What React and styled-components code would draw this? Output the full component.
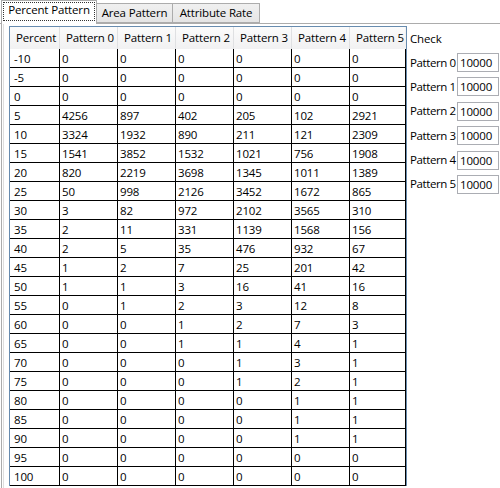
import React from "react";
import styled, { createGlobalStyle } from "styled-components";

const Global = createGlobalStyle`
  html, body { margin: 0; padding: 0; background: #fff; }
  body {
    font-family: "Open Sans", "Noto Sans", sans-serif;
    font-size: 11.5px;
    letter-spacing: -0.15px;
    color: #000;
  }
`;

const Window = styled.div`
  width: 500px;
  height: 488px;
  overflow: hidden;
  background: #fff;
  display: flex;
  flex-direction: column;
`;

const TabStrip = styled.div`
  display: flex;
  align-items: flex-end;
  height: 23px;
  padding-left: 1px;
  border-bottom: 1px solid #acacac;
  flex-shrink: 0;
`;

const Tab = styled.div`
  box-sizing: border-box;
  height: ${(p) => (p.$active ? "24px" : "20px")};
  margin-bottom: ${(p) => (p.$active ? "-1px" : "0")};
  margin-left: ${(p) => (p.$active ? "0" : "-1px")};
  width: ${(p) => p.$w}px;
  border: 1px solid #acacac;
  border-bottom: ${(p) => (p.$active ? "none" : "1px solid #acacac")};
  background: ${(p) => (p.$active ? "#fff" : "linear-gradient(#f0f0f0, #e5e5e5)")};
  padding: ${(p) => (p.$active ? "1px" : "0")};
  position: relative;
  z-index: ${(p) => (p.$active ? 1 : 0)};
  display: flex;
`;

const TabLabel = styled.span`
  flex: 1;
  display: flex;
  align-items: center;
  justify-content: center;
  line-height: 16px;
  padding-bottom: ${(p) => (p.$active ? "3px" : "0")};
  border: ${(p) => (p.$active ? "1px dotted #333" : "1px solid transparent")};
  margin-bottom: ${(p) => (p.$active ? "2px" : "0")};
  white-space: nowrap;
`;

const Panel = styled.div`
  flex: 1;
  display: flex;
  margin-left: 1px;
  border-left: 1px solid #acacac;
  min-height: 0;
`;

const Frame = styled.div`
  margin-left: 1px;
  border-left: 1px solid #dedede;
  padding: 2px 0 0 5px;
  flex-shrink: 0;
`;

const Grid = styled.div`
  width: 398px;
  box-sizing: border-box;
  border: 1px solid #688caf;
  border-bottom: none;
  display: grid;
  grid-template-columns: 50px repeat(5, 58px) 56px;
  grid-auto-rows: 19px;
  grid-template-rows: 22px;
`;

const HeadCell = styled.div`
  box-sizing: border-box;
  background: linear-gradient(#fbfbfb, #f1f1f2);
  border-right: 1px solid ${(p) => (p.$last ? "#f1f1f2" : "#dfe0e2")};
  display: flex;
  align-items: flex-end;
  padding: 0 0 3px 6px;
  line-height: 16px;
  white-space: nowrap;
  overflow: hidden;
`;

const Cell = styled.div`
  box-sizing: border-box;
  border-right: 1px solid #000;
  border-bottom: 1px solid #000;
  display: flex;
  align-items: center;
  padding: 1px 0 0 ${(p) => (p.$first ? "4px" : "2px")};
  line-height: 16px;
  white-space: nowrap;
`;

const Side = styled.div`
  width: 93px;
  box-sizing: border-box;
  display: flex;
  flex-direction: column;
  padding: 7px 1px 0 3px;
`;

const CheckTitle = styled.div`
  line-height: 16px;
  height: 16px;
  margin-bottom: 6px;
`;

const CheckRow = styled.div`
  display: flex;
  align-items: center;
  justify-content: space-between;
  height: 19px;
  margin-bottom: 5.4px;
`;

const CheckLabel = styled.span`
  line-height: 16px;
  white-space: nowrap;
  letter-spacing: -0.4px;
`;

const TextBox = styled.div`
  box-sizing: border-box;
  width: 42px;
  height: 19px;
  border: 1px solid #abadb3;
  padding: 0 0 0 2px;
  line-height: 17px;
  background: #fff;
`;

const headers = ["Percent", "Pattern 0", "Pattern 1", "Pattern 2", "Pattern 3", "Pattern 4", "Pattern 5"];

const rows = [
  [-10, 0, 0, 0, 0, 0, 0],
  [-5, 0, 0, 0, 0, 0, 0],
  [0, 0, 0, 0, 0, 0, 0],
  [5, 4256, 897, 402, 205, 102, 2921],
  [10, 3324, 1932, 890, 211, 121, 2309],
  [15, 1541, 3852, 1532, 1021, 756, 1908],
  [20, 820, 2219, 3698, 1345, 1011, 1389],
  [25, 50, 998, 2126, 3452, 1672, 865],
  [30, 3, 82, 972, 2102, 3565, 310],
  [35, 2, 11, 331, 1139, 1568, 156],
  [40, 2, 5, 35, 476, 932, 67],
  [45, 1, 2, 7, 25, 201, 42],
  [50, 1, 1, 3, 16, 41, 16],
  [55, 0, 1, 2, 3, 12, 8],
  [60, 0, 0, 1, 2, 7, 3],
  [65, 0, 0, 1, 1, 4, 1],
  [70, 0, 0, 0, 1, 3, 1],
  [75, 0, 0, 0, 1, 2, 1],
  [80, 0, 0, 0, 0, 1, 1],
  [85, 0, 0, 0, 0, 1, 1],
  [90, 0, 0, 0, 0, 1, 1],
  [95, 0, 0, 0, 0, 0, 0],
  [100, 0, 0, 0, 0, 0, 0],
];

const tabs = [
  { label: "Percent Pattern", w: 96, active: true },
  { label: "Area Pattern", w: 77 },
  { label: "Attribute Rate", w: 88 },
];

export default function App() {
  return (
    <>
      <Global />
      <Window>
        <TabStrip>
          {tabs.map((t) => (
            <Tab key={t.label} $active={t.active} $w={t.w}>
              <TabLabel $active={t.active}>{t.label}</TabLabel>
            </Tab>
          ))}
        </TabStrip>
        <Panel>
          <Frame>
            <Grid>
              {headers.map((h, i) => (
                <HeadCell key={h} $last={i === headers.length - 1}>{h}</HeadCell>
              ))}
              {rows.map((r) =>
                r.map((v, i) => (
                  <Cell key={`${r[0]}-${i}`} $first={i === 0}>{v}</Cell>
                ))
              )}
            </Grid>
          </Frame>
          <Side>
            <CheckTitle>Check</CheckTitle>
            {[0, 1, 2, 3, 4, 5].map((n) => (
              <CheckRow key={n}>
                <CheckLabel>Pattern {n}</CheckLabel>
                <TextBox>10000</TextBox>
              </CheckRow>
            ))}
          </Side>
        </Panel>
      </Window>
    </>
  );
}
